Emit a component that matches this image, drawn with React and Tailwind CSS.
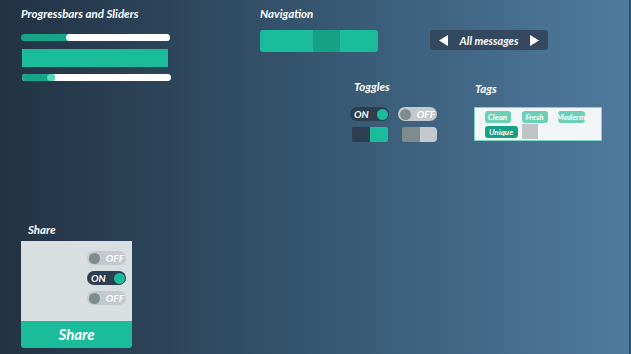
import React from "react";

const title = "text-[11.5px] leading-[14px] font-bold italic text-white";

function Toggle({ on }) {
  if (on) {
    return (
      <div className="w-[39px] h-[14px] rounded-full bg-[#2c3e50] flex items-center justify-between pl-[4px] pr-[1.5px]">
        <span className="text-[10px] leading-none font-bold italic text-white">ON</span>
        <span className="w-[11px] h-[11px] rounded-full bg-[#1abc9c]" />
      </div>
    );
  }
  return (
    <div className="w-[39px] h-[14px] rounded-full bg-[#c3c9cc] flex items-center justify-between pl-[1.5px] pr-[2px]">
      <span className="w-[11px] h-[11px] rounded-full bg-[#7f8c8d]" />
      <span className="text-[10px] leading-none font-bold italic text-white">OFF</span>
    </div>
  );
}

function Tag({ children, w, dark }) {
  return (
    <div
      className={`h-[12px] rounded-[3px] overflow-hidden whitespace-nowrap flex items-center justify-center text-[8px] leading-none font-bold italic text-white ${w} ${
        dark ? "bg-[#16a085]" : "bg-[#6ccfb6]"
      }`}
    >
      {children}
    </div>
  );
}

export default function App() {
  return (
    <div className="w-[631px] h-[354px] overflow-hidden flex border-r-[2px] border-[#30506a] bg-gradient-to-r from-[#223244] via-[#36566f] to-[#4f7b9f] font-['Lato',sans-serif]">
      {/* left column */}
      <div className="ml-[21px] w-[151px] flex flex-col pt-[7px] pb-[6px]">
        <p className={title}>Progressbars and Sliders</p>
        <div className="mt-[13px] w-[149px] h-[7px] rounded-full bg-[#17a589] flex">
          <div className="w-[45px]" />
          <div className="flex-1 rounded-full bg-white" />
        </div>
        <div className="mt-[8px] ml-[1px] w-[146px] h-[18px] bg-[#1abc9c]" />
        <div className="mt-[7px] ml-[1px] w-[149px] h-[7px] rounded-full bg-white flex items-center">
          <div className="w-[33px] h-full rounded-full bg-[#17a589] flex justify-end">
            <span className="w-[8px] h-[7px] rounded-full bg-[#5ad6bc]" />
          </div>
        </div>

        <div className="flex-1" />

        <p className={`${title} pl-[7px]`}>Share</p>
        <div className="mt-[4px] w-[111px] h-[80px] bg-[#d9dee0] flex flex-col items-end gap-[6px] pt-[10px] pr-[6px]">
          <Toggle />
          <Toggle on />
          <Toggle />
        </div>
        <button className="w-[111px] h-[27px] rounded-b-[3px] bg-[#1abc9c] text-white text-[15px] font-bold italic leading-none">
          Share
        </button>
      </div>

      {/* right area */}
      <div className="ml-[88px] pt-[7px]">
        <div className="flex">
          <div>
            <p className={title}>Navigation</p>
            <div className="mt-[9px] w-[118px] h-[22px] rounded-[3px] bg-[#1abc9c] flex">
              <div className="w-[53px]" />
              <div className="w-[27px] bg-[#16a085]" />
            </div>
          </div>
          <div className="ml-[52px] mt-[23px] w-[118px] h-[20px] rounded-[3px] bg-[#34485f] flex items-center justify-between px-[9px]">
            <svg width="9" height="11" viewBox="0 0 9 11">
              <polygon points="9,0 9,11 0,5.5" fill="#fff" />
            </svg>
            <span className="text-[11px] font-bold italic text-white leading-none">All messages</span>
            <svg width="9" height="11" viewBox="0 0 9 11">
              <polygon points="0,0 0,11 9,5.5" fill="#fff" />
            </svg>
          </div>
        </div>

        <div className="flex ml-[90px] mt-[28px]">
          <div>
            <p className={`${title} pl-[4px]`}>Toggles</p>
            <div className="mt-[13px] flex gap-[9px]">
              <Toggle on />
              <Toggle />
            </div>
            <div className="mt-[6px] flex">
              <div className="ml-[2px] w-[36px] h-[15px] flex rounded-[2px] overflow-hidden">
                <div className="flex-1 bg-[#2c3e50]" />
                <div className="flex-1 bg-[#1abc9c]" />
              </div>
              <div className="ml-[14px] w-[35px] h-[15px] flex rounded-[2px] rounded-r-[4px] overflow-hidden">
                <div className="flex-1 bg-[#7f8c8d]" />
                <div className="flex-1 bg-[#c3c9cc]" />
              </div>
            </div>
          </div>
          <div className="ml-[37px] pt-[2px]">
            <p className={`${title} pl-[1px]`}>Tags</p>
            <div className="mt-[11px] w-[128px] h-[34px] bg-[#f2f6f8] border-[1.5px] border-[#7fd6c3] pl-[9.5px] pt-[2.5px]">
              <div className="flex gap-[11px]">
                <Tag w="w-[26px]">Clean</Tag>
                <Tag w="w-[26px]">Fresh</Tag>
                <div className="-ml-[1px]">
                  <Tag w="w-[27px]">Moderm</Tag>
                </div>
              </div>
              <div className="flex items-start gap-[4px] mt-[1px]">
                <div className="mt-[2px]">
                  <Tag w="w-[33px]" dark>
                    Unique
                  </Tag>
                </div>
                <div className="w-[16px] h-[15px] bg-[#bdc3c7]" />
              </div>
            </div>
          </div>
        </div>
      </div>
    </div>
  );
}
